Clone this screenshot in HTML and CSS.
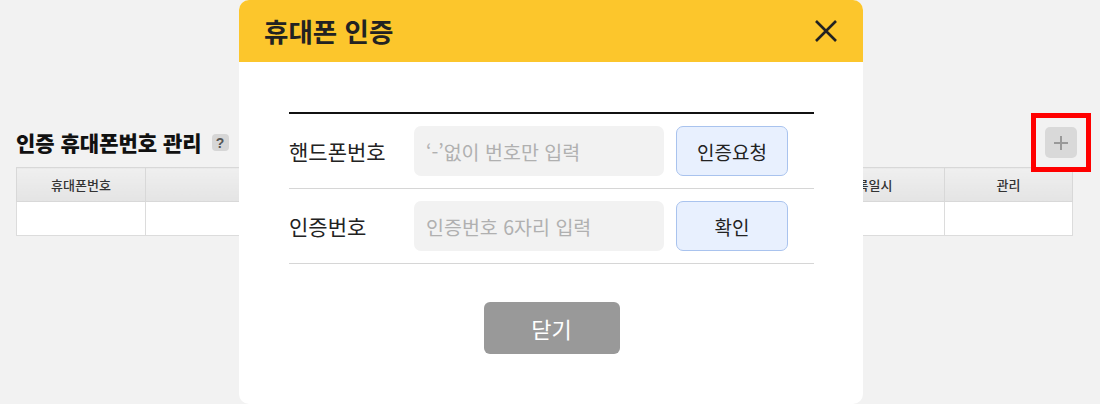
FILE: index.html
```html
<!DOCTYPE html>
<html lang="ko">
<head>
<meta charset="utf-8">
<link rel="stylesheet" href="styles.css">
</head>
<body>
<div class="page">
  <div class="title-row">
    <h2 class="page-title">인증 휴대폰번호 관리</h2>
    <span class="help">?</span>
    <span class="spacer"></span>
    <span class="add-wrap"><button class="add-btn"><svg width="16" height="16" viewBox="0 0 16 16"><path d="M8 1v14M1 8h14" stroke="#999" stroke-width="2" fill="none"/></svg></button></span>
  </div>
  <table class="list">
    <colgroup><col class="c1"><col><col class="c3"><col class="c4"></colgroup>
    <thead><tr><th>휴대폰번호</th><th>인증여부</th><th>등록일시</th><th>관리</th></tr></thead>
    <tbody><tr><td></td><td></td><td></td><td></td></tr></tbody>
  </table>
</div>

<div class="modal">
  <div class="modal-head">
    <h3 class="modal-title">휴대폰 인증</h3>
    <button class="close-x"><svg width="24" height="24" viewBox="0 0 24 24"><path d="M2 2L22 22M22 2L2 22" stroke="#222" stroke-width="2.6" fill="none"/></svg></button>
  </div>
  <div class="modal-body">
    <div class="form">
      <div class="form-row">
        <span class="label">핸드폰번호</span>
        <input class="field" type="text" placeholder="‘-’없이 번호만 입력">
        <button class="act">인증요청</button>
      </div>
      <div class="form-row">
        <span class="label">인증번호</span>
        <input class="field" type="text" placeholder="인증번호 6자리 입력">
        <button class="act">확인</button>
      </div>
    </div>
    <div class="foot"><button class="close-btn">닫기</button></div>
  </div>
</div>
</body>
</html>
```
FILE: styles.css
```css
* { box-sizing: border-box; }
html, body { margin: 0; padding: 0; }
body {
  background: #f2f2f2;
  font-family: "Noto Sans CJK KR", "Noto Sans", sans-serif;
  color: #222;
  width: 1100px;
  height: 404px;
  overflow: hidden;
}
.page { padding: 127px 23px 0 16px; }
.title-row { display: flex; align-items: center; height: 31px; }
.page-title { margin: 0; font-size: 21px; font-weight: 900; color: #111; line-height: 1; }
.help {
  margin-left: 10px; width: 17px; height: 17px; border-radius: 4px;
  background: #d6d6d6; color: #555; font-size: 14px; font-weight: 700;
  display: flex; align-items: center; justify-content: center; line-height: 1;
  font-family: "Liberation Sans", sans-serif;
}
.spacer { flex: 1; }
.add-wrap { outline: 5px solid #f00; outline-offset: 9px; display: flex; }
.add-btn {
  width: 32px; height: 31px; border: 0; border-radius: 5px; background: #d9d9d9;
  display: flex; align-items: center; justify-content: center; padding: 0;
}
.list {
  margin-top: 9px; width: 1057px; border-collapse: collapse; table-layout: fixed;
  background: #fff;
}
.c1 { width: 129px; }
.c3 { width: 152px; }
.c4 { width: 128px; }
.list th {
  height: 34px; font-size: 13px; font-weight: 500; color: #333;
  background: linear-gradient(#efefef, #e4e4e4);
  border: 1px solid #d8d8d8; padding: 0;
}
.list td { height: 34px; border: 1px solid #dcdcdc; padding: 0; }

.modal {
  position: absolute; left: 239px; top: 0; width: 624px; height: 404px;
  background: #fff; border-radius: 10px; overflow: hidden;
}
.modal-head {
  height: 62px; background: #fcc62c; display: flex; align-items: center;
  justify-content: space-between; padding: 0 25px 0 25px;
}
.modal-title { margin: 0; font-size: 26.5px; font-weight: 700; color: #222; line-height: 1; }
.close-x { border: 0; background: none; padding: 0; display: flex; }
.modal-body { padding: 50px 49px 0 50px; }
.form { border-top: 2px solid #111; }
.form-row {
  display: flex; align-items: center; height: 75px; border-bottom: 1px solid #d6d6d6;
}
.label { width: 125px; font-size: 21px; color: #222; }
.field {
  width: 250px; height: 50px; border: 0; border-radius: 7px; background: #f2f2f2;
  padding: 0 12px; font-family: inherit; font-size: 19.5px; color: #222;
}
.field::placeholder { color: #b0b0b0; }
.act {
  margin-left: 12px; width: 112px; height: 50px; border: 1px solid #a9c3ee;
  border-radius: 7px; background: #e8f0fe; font-family: inherit; font-size: 19px; color: #222;
}
.foot { display: flex; justify-content: center; padding-top: 38px; }
.close-btn {
  width: 136px; height: 52px; border: 0; border-radius: 6px; background: #999;
  color: #fff; font-family: inherit; font-size: 22px;
}
```
